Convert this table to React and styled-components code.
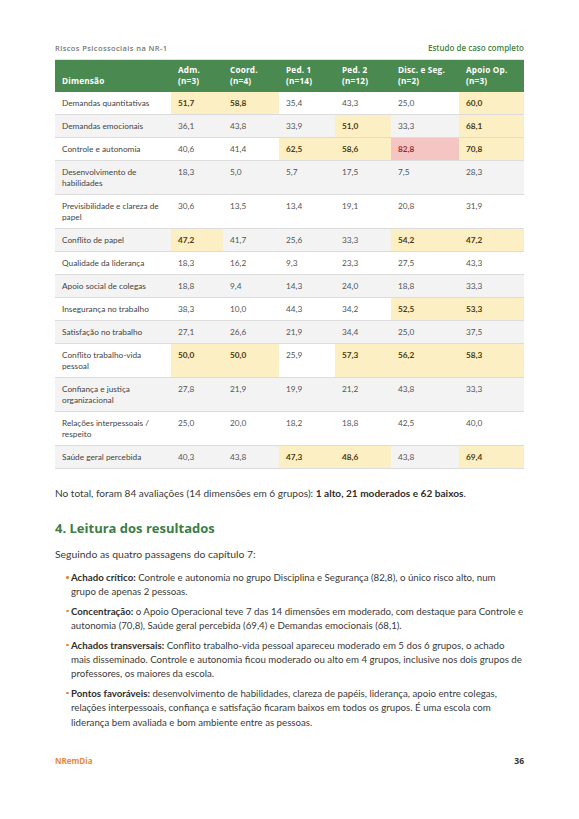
import React from 'react';
import styled, { createGlobalStyle } from 'styled-components';

const GlobalStyle = createGlobalStyle`
  html, body {
    margin: 0;
    padding: 0;
    background: #ffffff;
  }
`;

const COLUMNS = [
  { label: ['Dimensão'], width: 116 },
  { label: ['Adm.', '(n=3)'], width: 52 },
  { label: ['Coord.', '(n=4)'], width: 56 },
  { label: ['Ped. 1', '(n=14)'], width: 56 },
  { label: ['Ped. 2', '(n=12)'], width: 56 },
  { label: ['Disc. e Seg.', '(n=2)'], width: 68 },
  { label: ['Apoio Op.', '(n=3)'], width: 65 },
];

// y = moderado, r = alto
const ROWS = [
  ['Demandas quantitativas', ['51,7', 'y'], ['58,8', 'y'], '35,4', '43,3', '25,0', ['60,0', 'y']],
  ['Demandas emocionais', '36,1', '43,8', '33,9', ['51,0', 'y'], '33,3', ['68,1', 'y']],
  ['Controle e autonomia', '40,6', '41,4', ['62,5', 'y'], ['58,6', 'y'], ['82,8', 'r'], ['70,8', 'y']],
  ['Desenvolvimento de habilidades', '18,3', '5,0', '5,7', '17,5', '7,5', '28,3'],
  ['Previsibilidade e clareza de papel', '30,6', '13,5', '13,4', '19,1', '20,8', '31,9'],
  ['Conflito de papel', ['47,2', 'y'], '41,7', '25,6', '33,3', ['54,2', 'y'], ['47,2', 'y']],
  ['Qualidade da liderança', '18,3', '16,2', '9,3', '23,3', '27,5', '43,3'],
  ['Apoio social de colegas', '18,8', '9,4', '14,3', '24,0', '18,8', '33,3'],
  ['Insegurança no trabalho', '38,3', '10,0', '44,3', '34,2', ['52,5', 'y'], ['53,3', 'y']],
  ['Satisfação no trabalho', '27,1', '26,6', '21,9', '34,4', '25,0', '37,5'],
  ['Conflito trabalho-vida pessoal', ['50,0', 'y'], ['50,0', 'y'], '25,9', ['57,3', 'y'], ['56,2', 'y'], ['58,3', 'y']],
  ['Confiança e justiça organizacional', '27,8', '21,9', '19,9', '21,2', '43,8', '33,3'],
  ['Relações interpessoais / respeito', '25,0', '20,0', '18,2', '18,8', '42,5', '40,0'],
  ['Saúde geral percebida', '40,3', '43,8', ['47,3', 'y'], ['48,6', 'y'], '43,8', ['69,4', 'y']],
];

const FINDINGS = [
  {
    title: 'Achado crítico:',
    text: ' Controle e autonomia no grupo Disciplina e Segurança (82,8), o único risco alto, num grupo\u00a0de apenas 2 pessoas.',
  },
  {
    title: 'Concentração:',
    text: ' o Apoio Operacional teve 7 das 14 dimensões em moderado, com destaque para Controle e autonomia (70,8), Saúde geral percebida (69,4) e Demandas emocionais (68,1).',
  },
  {
    title: 'Achados transversais:',
    text: ' Conflito trabalho-vida pessoal apareceu moderado em 5 dos 6 grupos, o achado mais disseminado. Controle e autonomia ficou moderado ou alto em 4 grupos, inclusive nos dois grupos de professores, os maiores da escola.',
  },
  {
    title: 'Pontos favoráveis:',
    text: ' desenvolvimento de habilidades, clareza de papéis, liderança, apoio entre colegas, relações interpessoais, confiança e satisfação ficaram baixos em todos os grupos. É uma escola com liderança bem avaliada e bom ambiente entre as pessoas.',
  },
];

const App = () => {
  return (
    <>
      <GlobalStyle />
      <Page>
        <Header>
          <HeaderTitle>Riscos Psicossociais na NR-1</HeaderTitle>
          <HeaderTag>Estudo de caso completo</HeaderTag>
        </Header>

        <Table>
          <colgroup>
            {COLUMNS.map((c, i) => (
              <Col key={i} $width={c.width} />
            ))}
          </colgroup>
          <thead>
            <tr>
              {COLUMNS.map((c, i) => (
                <HeadCell key={i}>
                  {c.label.map((l, j) => (
                    <span key={j}>
                      {l}
                      {j < c.label.length - 1 && <br />}
                    </span>
                  ))}
                </HeadCell>
              ))}
            </tr>
          </thead>
          <tbody>
            {ROWS.map((row, i) => (
              <Row key={i} $striped={i % 2 === 1}>
                <NameCell>{row[0]}</NameCell>
                {row.slice(1).map((v, j) =>
                  Array.isArray(v) ? (
                    <Cell key={j} $level={v[1]}>
                      {v[0]}
                    </Cell>
                  ) : (
                    <Cell key={j}>{v}</Cell>
                  )
                )}
              </Row>
            ))}
          </tbody>
        </Table>

        <Summary>
          No total, foram 84 avaliações (14 dimensões em 6 grupos):{' '}
          <strong>1 alto, 21 moderados e 62 baixos</strong>.
        </Summary>

        <SectionTitle>4. Leitura dos resultados</SectionTitle>

        <Paragraph>Seguindo as quatro passagens do capítulo 7:</Paragraph>

        <List>
          {FINDINGS.map((f, i) => (
            <Item key={i}>
              <strong>{f.title}</strong>
              {f.text}
            </Item>
          ))}
        </List>

        <Footer>
          <Brand>NRemDia</Brand>
          <PageNumber>36</PageNumber>
        </Footer>
      </Page>
    </>
  );
};

const Page = styled.div`
  box-sizing: border-box;
  width: 579px;
  height: 819px;
  padding: 42px 55px 52px;
  display: flex;
  flex-direction: column;
  font-family: 'Lato', 'Liberation Sans', sans-serif;
  color: #3a3a3a;
`;

const Header = styled.header`
  display: flex;
  justify-content: space-between;
  align-items: baseline;
  padding-bottom: 5px;
  border-bottom: 1px solid #e2e2e2;
  font-family: 'Open Sans', 'Liberation Sans', sans-serif;
  font-size: 8px;
  line-height: 12px;
`;

const HeaderTitle = styled.span`
  color: #777777;
  font-size: 7.5px;
  font-weight: 600;
  letter-spacing: 0.4px;
`;

const HeaderTag = styled.span`
  color: #3f7f46;
  font-weight: 600;
`;

const Table = styled.table`
  width: 469px;
  border-collapse: collapse;
  table-layout: fixed;
`;

const Col = styled.col`
  width: ${(p) => p.$width}px;
`;

const HeadCell = styled.th`
  background: #4a8a50;
  color: #ffffff;
  text-align: left;
  vertical-align: bottom;
  padding: 5px 7px 6px;
  font-family: 'Open Sans', 'Liberation Sans', sans-serif;
  font-size: 8.2px;
  font-weight: 700;
  line-height: 10.5px;
  letter-spacing: 0.2px;
`;

const Row = styled.tr`
  background: ${(p) => (p.$striped ? '#f3f3f3' : '#ffffff')};
  border-bottom: 1px solid #dcdcdc;
`;

const NameCell = styled.td`
  padding: 6px 7px 5px;
  font-size: 8.25px;
  line-height: 11px;
  color: #444444;
  vertical-align: top;
`;

const LEVELS = {
  y: { bg: '#fcefc3', color: '#4d3a10' },
  r: { bg: '#f5c5c4', color: '#9e2a2a' },
};

const Cell = styled.td`
  padding: 6px 7px 5px;
  font-size: 8.25px;
  line-height: 11px;
  vertical-align: top;
  background: ${(p) => (p.$level ? LEVELS[p.$level].bg : 'transparent')};
  color: ${(p) => (p.$level ? LEVELS[p.$level].color : '#555555')};
  font-weight: ${(p) => (p.$level ? 700 : 400)};
`;

const Summary = styled.p`
  margin: 17px 0 0;
  font-size: 10.1px;
  line-height: 14px;
  color: #3a3a3a;

  strong {
    font-weight: 700;
    color: #2e2e2e;
  }
`;

const SectionTitle = styled.h2`
  margin: 19px 0 0;
  font-family: 'Open Sans', 'Liberation Sans', sans-serif;
  font-size: 13px;
  line-height: 18px;
  font-weight: 700;
  color: #3e7d45;
`;

const Paragraph = styled.p`
  margin: 10px 0 0;
  font-size: 10.4px;
  line-height: 14px;
`;

const List = styled.ul`
  list-style: none;
  margin: 9px 0 0;
  padding: 0 0 0 16px;
  display: flex;
  flex-direction: column;
  gap: 5px;
`;

const Item = styled.li`
  position: relative;
  font-size: 9.7px;
  line-height: 14.4px;
  color: #3a3a3a;

  &::before {
    content: '';
    position: absolute;
    left: -5px;
    top: 6px;
    width: 2.5px;
    height: 2.5px;
    border-radius: 50%;
    background: #e8873a;
  }

  strong {
    font-weight: 700;
    color: #2e2e2e;
  }
`;

const Footer = styled.footer`
  margin-top: auto;
  display: flex;
  justify-content: space-between;
  align-items: baseline;
  font-family: 'Open Sans', 'Liberation Sans', sans-serif;
  font-size: 8px;
  line-height: 12px;
  font-weight: 700;
`;

const Brand = styled.span`
  color: #e8873a;
`;

const PageNumber = styled.span`
  color: #333333;
  font-size: 8.5px;
`;

export default App;
